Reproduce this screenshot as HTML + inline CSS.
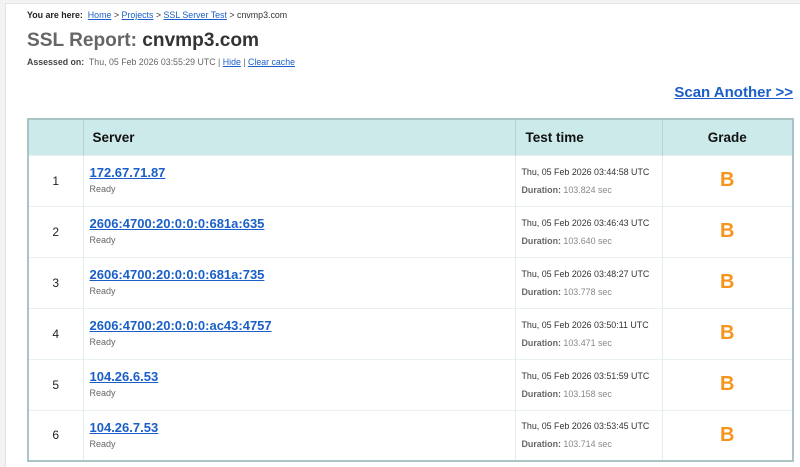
<!DOCTYPE html>
<html><head><meta charset="utf-8"><style>
body{margin:0;width:800px;height:467px;background:#fff;font-family:"Liberation Sans",Arial,sans-serif;position:relative;overflow:hidden}
.lb{position:absolute;left:0;top:0;width:5px;height:467px;background:#f3f3f3;border-right:1px solid #e4e4e4}
.tb{position:absolute;left:5px;top:0;right:0;height:3px;background:#f3f3f3;border-bottom:1px solid #e4e4e4}
a{color:#1a5fc8}
.crumb{position:absolute;left:27px;top:10px;font-size:8.85px;color:#333}
.crumb b{color:#222}
h1{position:absolute;left:27px;top:30px;margin:0;font-size:19.1px;color:#666;font-weight:bold}
h1 span{color:#333}
.ass{position:absolute;left:27px;top:57px;font-size:8.8px;color:#666}
.ass b{color:#444}
.scan{position:absolute;right:7px;top:84px;font-size:15px;font-weight:bold}
table{position:absolute;left:27px;top:118px;width:767px;border-collapse:collapse;border:2px solid #a9c4c4;box-sizing:border-box}
th{background:#cdeaea;height:36px;padding:0 0 0 9px;font-size:13.5px;color:#111;text-align:left;border-left:1px solid #b7d3d3;box-sizing:border-box}
td{border-top:1px solid #e8f0f0;border-left:1px solid #e2eded;height:51px;box-sizing:border-box;font-size:12px;color:#222;padding:0 0 0 6px;vertical-align:middle}
td.n{text-align:center;padding:0;width:55px}
td.s{width:432px}
td.s a{font-size:13px;font-weight:bold;display:block;margin-top:-2px}
td.s div{font-size:9px;color:#666;margin-top:4px}
td.t{width:147px;font-size:8.9px;color:#333}
td.t div+div{margin-top:8px;color:#888}
td.t b{color:#666}
td.g{text-align:center;padding:0;font-size:20px;font-weight:bold;color:#f7941e}
</style></head><body>
<div class="lb"></div><div class="tb"></div>
<div class="crumb"><b>You are here:</b>&nbsp; <a href="#">Home</a> &gt; <a href="#">Projects</a> &gt; <a href="#">SSL Server Test</a> &gt; cnvmp3.com</div>
<h1>SSL Report: <span>cnvmp3.com</span></h1>
<div class="ass"><b>Assessed on:</b>&nbsp; Thu, 05 Feb 2026 03:55:29 UTC | <a href="#">Hide</a> | <a href="#">Clear cache</a></div>
<a class="scan" href="#">Scan Another &gt;&gt;</a>
<table>
<tr><th style="border-left:none;padding:0"></th><th>Server</th><th style="padding-left:10px">Test time</th><th style="text-align:center;padding:0">Grade</th></tr>
<tr><td class="n">1</td><td class="s"><a href="#">172.67.71.87</a><div>Ready</div></td><td class="t"><div>Thu, 05 Feb 2026 03:44:58 UTC</div><div><b>Duration:</b> 103.824 sec</div></td><td class="g">B</td></tr>
<tr><td class="n">2</td><td class="s"><a href="#">2606:4700:20:0:0:0:681a:635</a><div>Ready</div></td><td class="t"><div>Thu, 05 Feb 2026 03:46:43 UTC</div><div><b>Duration:</b> 103.640 sec</div></td><td class="g">B</td></tr>
<tr><td class="n">3</td><td class="s"><a href="#">2606:4700:20:0:0:0:681a:735</a><div>Ready</div></td><td class="t"><div>Thu, 05 Feb 2026 03:48:27 UTC</div><div><b>Duration:</b> 103.778 sec</div></td><td class="g">B</td></tr>
<tr><td class="n">4</td><td class="s"><a href="#">2606:4700:20:0:0:0:ac43:4757</a><div>Ready</div></td><td class="t"><div>Thu, 05 Feb 2026 03:50:11 UTC</div><div><b>Duration:</b> 103.471 sec</div></td><td class="g">B</td></tr>
<tr><td class="n">5</td><td class="s"><a href="#">104.26.6.53</a><div>Ready</div></td><td class="t"><div>Thu, 05 Feb 2026 03:51:59 UTC</div><div><b>Duration:</b> 103.158 sec</div></td><td class="g">B</td></tr>
<tr><td class="n">6</td><td class="s"><a href="#">104.26.7.53</a><div>Ready</div></td><td class="t"><div>Thu, 05 Feb 2026 03:53:45 UTC</div><div><b>Duration:</b> 103.714 sec</div></td><td class="g">B</td></tr>
</table>
</body></html>
